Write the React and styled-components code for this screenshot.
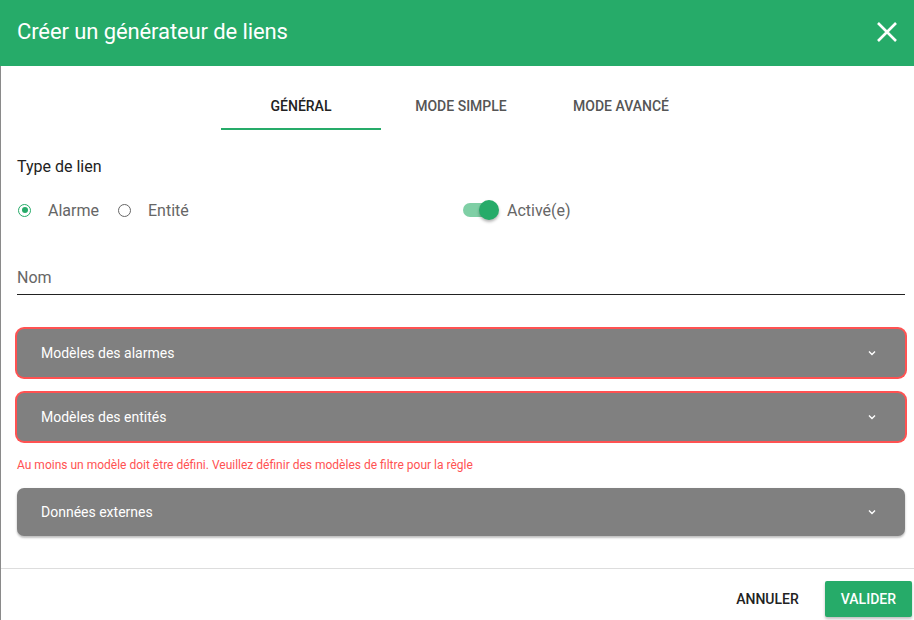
import React from "react"
import styled, { createGlobalStyle } from "styled-components"

const GREEN = "#26ab69"
const RED = "#ff5252"

const GlobalStyle = createGlobalStyle`
  html, body {
    margin: 0;
    padding: 0;
    background: #fff;
    font-family: Roboto, "Liberation Sans", sans-serif;
  }
`

const Page = styled.div`
  width: 914px;
  height: 620px;
  overflow: hidden;
  display: flex;
  flex-direction: column;
  background: #fff;
`

const Header = styled.header`
  height: 66px;
  flex-shrink: 0;
  background: ${GREEN};
  display: flex;
  align-items: center;
  justify-content: space-between;
  padding: 0 14px 3px 17px;
  box-sizing: border-box;
`

const Title = styled.h1`
  margin: 0;
  font-size: 22px;
  font-weight: 400;
  color: #fff;
  letter-spacing: -0.1px;
`

const CloseButton = styled.button`
  border: 0;
  background: none;
  padding: 0;
  width: 26px;
  height: 26px;
  display: flex;
  align-items: center;
  justify-content: center;
  cursor: pointer;
`

const Body = styled.div`
  flex: 1;
  display: flex;
  flex-direction: column;
  border-left: 1px solid #8a8a8a;
`

const Content = styled.div`
  padding: 16px 9px 32px 16px;
`

const Tabs = styled.div`
  display: flex;
  justify-content: center;
  height: 48px;
`

const Tab = styled.div`
  width: 160px;
  display: flex;
  align-items: center;
  justify-content: center;
  font-size: 14px;
  font-weight: 500;
  text-transform: uppercase;
  color: ${(p) => (p.active ? "#222" : "#555")};
  border-bottom: 2px solid ${(p) => (p.active ? GREEN : "transparent")};
  box-sizing: border-box;
  padding-top: 2px;
`

const Label = styled.div`
  margin-top: 27px;
  font-size: 16px;
  color: #222;
  line-height: 20px;
`

const Row = styled.div`
  display: grid;
  grid-template-columns: 1fr 1fr;
  margin-top: 22px;
  height: 22px;
  align-items: center;
`

const Radios = styled.div`
  display: flex;
  align-items: center;
`

const RadioItem = styled.label`
  display: flex;
  align-items: center;
  font-size: 16px;
  color: #666;
  margin-right: 18px;
`

const RadioCircle = styled.span`
  width: 11px;
  height: 11px;
  border-radius: 50%;
  border: 1.6px solid ${(p) => (p.checked ? GREEN : "#666")};
  margin: 0 17px 0 1px;
  display: flex;
  align-items: center;
  justify-content: center;
  &::after {
    content: "";
    width: 6px;
    height: 6px;
    border-radius: 50%;
    background: ${(p) => (p.checked ? GREEN : "transparent")};
  }
`

const SwitchWrap = styled.div`
  display: flex;
  align-items: center;
  padding-left: 2px;
  font-size: 16px;
  color: #666;
`

const Track = styled.span`
  position: relative;
  width: 34px;
  height: 14px;
  border-radius: 7px;
  background: #7fcfa5;
  margin-right: 10px;
`

const Thumb = styled.span`
  position: absolute;
  right: -2px;
  top: -3px;
  width: 20px;
  height: 20px;
  border-radius: 50%;
  background: ${GREEN};
  box-shadow: 0 2px 3px rgba(0, 0, 0, 0.3);
`

const Field = styled.div`
  margin-top: 47px;
  border-bottom: 1px solid #222;
  padding-bottom: 6px;
  font-size: 16px;
  color: #666;
  line-height: 20px;
`

const Panels = styled.div`
  margin-top: 34px;
  display: flex;
  flex-direction: column;
  gap: 16px;
`

const Panel = styled.div`
  height: 48px;
  border-radius: 7px;
  background: #808080;
  display: flex;
  align-items: center;
  justify-content: space-between;
  padding: 0 28px 0 24px;
  color: #fff;
  font-size: 14px;
  box-shadow: ${(p) =>
    p.error
      ? `0 0 0 2px ${RED}`
      : "0 2px 2px rgba(0,0,0,0.18), 0 1px 3px rgba(0,0,0,0.12)"};
`

const ErrorText = styled.div`
  font-size: 12px;
  color: ${RED};
  margin: 1px 0 0 0;
  line-height: 14px;
`

const Footer = styled.footer`
  border-top: 1px solid #ddd;
  flex: 1;
  display: flex;
  justify-content: flex-end;
  align-items: flex-start;
  padding: 12px 2px 0 0;
  gap: 10px;
`

const Button = styled.button`
  height: 36px;
  padding: 0 16px;
  border: 0;
  border-radius: 2px;
  font-family: inherit;
  font-size: 14px;
  font-weight: 500;
  text-transform: uppercase;
  color: ${(p) => (p.primary ? "#fff" : "#222")};
  background: ${(p) => (p.primary ? GREEN : "transparent")};
  box-shadow: ${(p) => (p.primary ? "0 2px 3px rgba(0,0,0,0.25)" : "none")};
`

const Chevron = () => (
  <svg width="10" height="10" viewBox="0 0 10 10">
    <path d="M2 3.5 L5 6.5 L8 3.5" fill="none" stroke="#fff" strokeWidth="1.4" />
  </svg>
)

const panels = [
  { title: "Modèles des alarmes", error: true },
  { title: "Modèles des entités", error: true },
]

export default function App() {
  return (
    <Page>
      <GlobalStyle />
      <Header>
        <Title>Créer un générateur de liens</Title>
        <CloseButton aria-label="Fermer">
          <svg width="22" height="22" viewBox="0 0 22 22">
            <path d="M2 2 L20 20 M20 2 L2 20" stroke="#fff" strokeWidth="2.6" />
          </svg>
        </CloseButton>
      </Header>
      <Body>
        <Content>
          <Tabs>
            <Tab active>Général</Tab>
            <Tab>Mode simple</Tab>
            <Tab>Mode avancé</Tab>
          </Tabs>
          <Label>Type de lien</Label>
          <Row>
            <Radios>
              <RadioItem>
                <RadioCircle checked />
                Alarme
              </RadioItem>
              <RadioItem>
                <RadioCircle />
                Entité
              </RadioItem>
            </Radios>
            <SwitchWrap>
              <Track>
                <Thumb />
              </Track>
              Activé(e)
            </SwitchWrap>
          </Row>
          <Field>Nom</Field>
          <Panels>
            {panels.map((p) => (
              <Panel key={p.title} error={p.error}>
                {p.title}
                <Chevron />
              </Panel>
            ))}
            <ErrorText>
              Au moins un modèle doit être défini. Veuillez définir des modèles de filtre pour la règle
            </ErrorText>
            <Panel>
              Données externes
              <Chevron />
            </Panel>
          </Panels>
        </Content>
        <Footer>
          <Button>Annuler</Button>
          <Button primary>Valider</Button>
        </Footer>
      </Body>
    </Page>
  )
}
